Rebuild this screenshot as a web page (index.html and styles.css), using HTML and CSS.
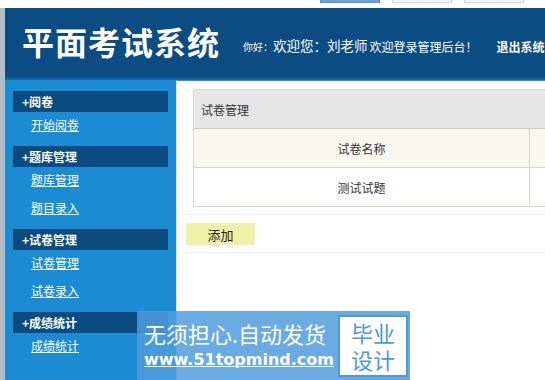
FILE: index.html
```html
<!DOCTYPE html>
<html lang="zh-cn">

<head>
    <meta charset="UTF-8" />
    <title>平面考试系统</title>
    <link rel="stylesheet" href="styles.css">
</head>

<body>
    <div class="topbar">
        <span class="tb-btn tb-blue"></span>
        <span class="tb-btn"></span>
        <span class="tb-btn"></span>
    </div>

    <div class="frame">
        <header class="head">
            <h1>平面考试系统</h1>
            <span class="hello">你好：</span>
            <span class="welcome">欢迎您：刘老师</span>
            <span class="tip">欢迎登录管理后台！</span>
            <a class="logout" href="#">退出系统</a>
        </header>

        <div class="body">
            <nav class="side">
                <div class="group">
                    <div class="group-title">+阅卷</div>
                    <a href="#">开始阅卷</a>
                </div>
                <div class="group">
                    <div class="group-title">+题库管理</div>
                    <a href="#">题库管理</a>
                    <a href="#">题目录入</a>
                </div>
                <div class="group">
                    <div class="group-title">+试卷管理</div>
                    <a href="#">试卷管理</a>
                    <a href="#">试卷录入</a>
                </div>
                <div class="group">
                    <div class="group-title">+成绩统计</div>
                    <a href="#">成绩统计</a>
                </div>
            </nav>

            <main class="main">
                <table class="list">
                    <tr class="caption">
                        <td colspan="2">试卷管理</td>
                    </tr>
                    <tr class="th">
                        <td class="name">试卷名称</td>
                        <td></td>
                    </tr>
                    <tr>
                        <td class="name">测试试题</td>
                        <td></td>
                    </tr>
                </table>
                <div class="actions">
                    <button class="add">添加</button>
                </div>
            </main>
        </div>
    </div>

    <!-- 水印 -->
    <div class="mark">
        <div class="mark-text">
            <div class="mark-line">无须担心.自动发货</div>
            <div class="mark-url">www.51topmind.com</div>
        </div>
        <div class="mark-box">
            <span>毕业</span>
            <span>设计</span>
        </div>
    </div>
</body>

</html>
```

FILE: styles.css
```css
body {
    margin: 0;
    padding: 0;
    width: 545px;
    height: 380px;
    overflow: hidden;
    background: #fff;
    font-family: "Noto Sans CJK SC", "Noto Sans", sans-serif;
    font-size: 12px;
    color: #333;
    position: relative;
}

.topbar {
    height: 8px;
    background: #fff;
    display: flex;
    align-items: flex-start;
    padding-left: 320px;
    gap: 12px;
}

.tb-btn {
    width: 58px;
    height: 2px;
    border: 1px solid #d8d8d8;
    border-top: none;
    background: #f4f4f4;
}

.tb-blue {
    background: #6a9fe0;
    border-color: #5a8fd0;
}

.frame {
    border-left: 5px solid #b9bcc0;
}

.head {
    height: 70px;
    background: #0b4c82;
    border-bottom: 2px solid #17649e;
    display: flex;
    align-items: center;
    padding-left: 17px;
    color: #fff;
    white-space: nowrap;
    overflow: hidden;
}

.head h1 {
    margin: 0 23px 0 0;
    font-size: 32px;
    font-weight: bold;
    letter-spacing: 1px;
    position: relative;
    top: -2px;
}

.hello {
    font-size: 10px;
    margin-top: 6px;
}

.welcome {
    font-size: 13.5px;
    margin-top: 4px;
}

.tip {
    font-size: 12px;
    margin-top: 6px;
    margin-left: 2px;
    margin-right: 19px;
}

.logout {
    color: #fff;
    font-weight: bold;
    font-size: 12px;
    text-decoration: none;
    margin-top: 6px;
}

.body {
    display: flex;
    height: 300px;
}

.side {
    width: 171px;
    flex: none;
    background: #1b8bd3;
    padding: 11px 8px 0 8px;
    box-sizing: border-box;
}

.group {
    margin-bottom: 12px;
}

.group-title {
    height: 21px;
    line-height: 21px;
    background: #0b4b80;
    color: #fff;
    font-weight: bold;
    padding-left: 9px;
}

.side a {
    display: block;
    color: #fff;
    padding-left: 18px;
    margin-top: 3px;
    line-height: 19px;
}

.side a + a {
    margin-top: 9px;
}

.main {
    flex: 1;
    border-top: 1px solid #2a8ed0;
    border-left: 1px solid #e0e0e0;
    padding: 8px 0 0 11px;
    min-width: 0;
}

.list {
    border-collapse: collapse;
    width: 420px;
    margin-left: 5px;
    border: 1px solid #d8d6c8;
}

.list td {
    height: 36px;
    border: 1px solid #d8d6c8;
    font-size: 12px;
    color: #333;
}

.caption td {
    background: #e5e5e5;
    padding-left: 7px;
    border-bottom-color: #d0cfc0;
}

.th td {
    background: #f8f8ef;
}

.name {
    width: 333px;
    text-align: center;
}

.actions {
    margin-top: 7px;
    margin-left: -2px;
    border-top: 1px solid #eeeeee;
    border-bottom: 1px solid #eeeeee;
    padding: 8px 0 7px 0;
}

.add {
    width: 69px;
    height: 22px;
    border: none;
    background: #f0f0a6;
    font-family: "Noto Sans CJK SC", sans-serif;
    font-size: 13px;
    color: #222;
    padding: 0;
}

.mark {
    position: absolute;
    left: 137px;
    top: 311px;
    width: 273px;
    height: 69px;
    background: rgba(80, 156, 222, 0.85);
    display: flex;
    align-items: center;
    box-sizing: border-box;
    padding-left: 7px;
}

.mark-text {
    width: 194px;
    color: #fff;
    white-space: nowrap;
}

.mark-line {
    font-size: 22px;
    line-height: 29px;
}

.mark-url {
    font-family: "DejaVu Sans", sans-serif;
    font-weight: bold;
    font-size: 16px;
    line-height: 24px;
    text-decoration: underline;
    text-decoration-thickness: 1px;
}

.mark-box {
    width: 70px;
    height: 62px;
    background: #fff;
    border: 2px solid #4c9ad8;
    box-sizing: border-box;
    color: #4c9ad8;
    font-size: 22px;
    line-height: 27px;
    display: flex;
    flex-direction: column;
    align-items: center;
    justify-content: center;
}
```
